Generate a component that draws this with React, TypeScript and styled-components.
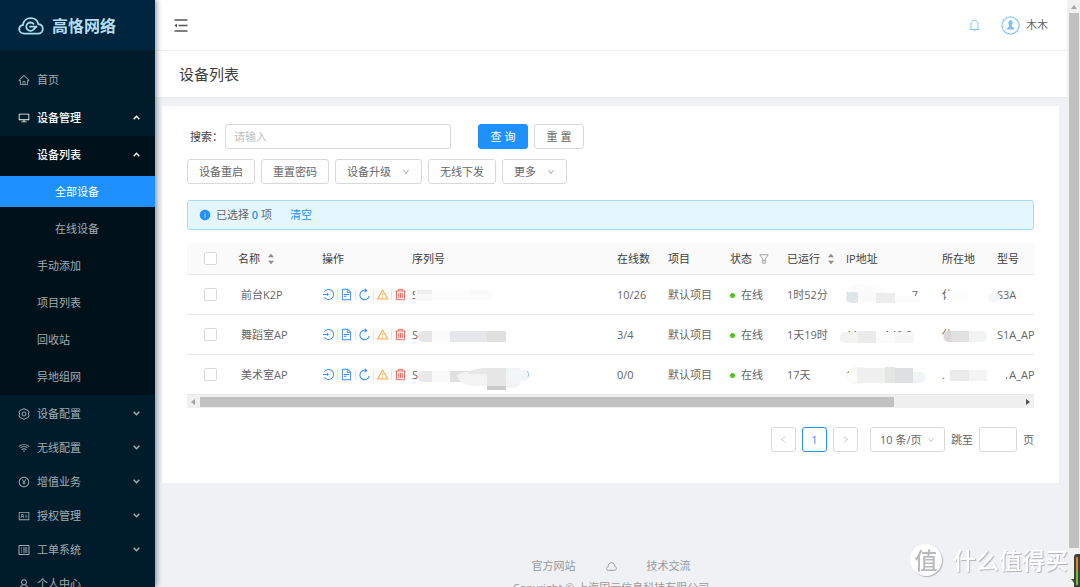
import React from "react";
import styled, { createGlobalStyle, css } from "styled-components";
import {
  AiOutlineHome,
  AiOutlineDesktop,
  AiOutlineWifi,
  AiOutlinePayCircle,
  AiOutlineIdcard,
  AiOutlineUser,
  AiOutlineLogin,
  AiOutlineFileText,
  AiOutlineWarning,
  AiOutlineDown,
  AiOutlineLeft,
  AiOutlineRight,
  AiFillInfoCircle,
} from "react-icons/ai";

const blue = "#1e90ff";
const line = "#e8e8e8";
const border = "#d9d9d9";
const text = "#666666";
const strong = "#404040";

const Global = createGlobalStyle`
  *, *::before, *::after { box-sizing: border-box; }
  body {
    margin: 0;
    overflow: hidden;
    background: #eff1f5;
    color: ${text};
    font: 11px/16px "Open Sans", "Noto Sans CJK SC", sans-serif;
  }
  button, input, select { font: inherit; color: inherit; }
  ul { list-style: none; margin: 0; padding: 0; }
  a { color: inherit; text-decoration: none; }
  svg { display: block; flex: none; }
`;

const Shell = styled.div`
  display: flex;
  height: 100vh;
  overflow: hidden;
`;

/* ---------- sidebar ---------- */

const Sidebar = styled.aside`
  flex: 0 0 155px;
  z-index: 1;
  background: #001c2b;
  box-shadow: 2px 0 5px rgba(0, 21, 41, 0.4);
  overflow: hidden;
`;

const Brand = styled.a`
  display: flex;
  align-items: center;
  gap: 8px;
  height: 50px;
  padding: 2px 18px 0;
  background: #00253f;
  color: #b4dfee;
  font-size: 16px;
  line-height: 24px;
  font-weight: 700;
`;

const Menu = styled.ul`
  display: flex;
  flex-direction: column;
  gap: 3px;
  padding-top: 14px;
`;

const SubMenu = styled.ul<{ $dark?: boolean }>`
  display: flex;
  flex-direction: column;
  gap: 6px;
  margin-top: ${(p) => (p.$dark ? 3 : 6)}px;
  padding: ${(p) => (p.$dark ? "3px 0" : "0")};
  background: ${(p) => (p.$dark ? "#00111a" : "transparent")};
`;

const MenuItem = styled.li<{ $spaced?: boolean }>`
  margin-bottom: ${(p) => (p.$spaced ? 4 : 0)}px;
`;

const MenuLink = styled.a<{ $level?: number; $open?: boolean; $active?: boolean }>`
  display: flex;
  align-items: center;
  height: 31px;
  padding: 0 15px 0 ${(p) => [18, 37, 55][p.$level ?? 0]}px;
  gap: 7px;
  color: ${(p) => (p.$open || p.$active ? "#ffffff" : "#a3acb2")};
  background: ${(p) => (p.$active ? blue : "transparent")};
  font-weight: ${(p) => (p.$open ? 500 : 400)};

  span { flex: 1; }
`;

/* ---------- main area ---------- */

const Main = styled.div`
  flex: 1;
  min-width: 0;
  display: flex;
  flex-direction: column;
`;

const TopBar = styled.header`
  flex: none;
  display: flex;
  align-items: center;
  justify-content: space-between;
  height: 51px;
  padding: 0 19px;
  background: #fff;
  border-bottom: 1px solid #eef2f3;
`;

const IconButton = styled.button<{ $color?: string }>`
  display: inline-flex;
  padding: 0;
  border: 0;
  background: none;
  color: ${(p) => p.$color ?? text};
`;

const UserArea = styled.div`
  display: flex;
  align-items: center;
  gap: 21px;
`;

const User = styled.a`
  display: flex;
  align-items: center;
  gap: 6px;
`;

const PageHeader = styled.div`
  flex: none;
  padding: 12px 24px 11px;
  background: #fff;
  border-bottom: 1px solid #e9ebef;

  h1 {
    margin: 0;
    color: ${strong};
    font-size: 15px;
    line-height: 23px;
    font-weight: 400;
  }
`;

const Card = styled.main`
  flex: none;
  margin: 8px 8px 0 7px;
  padding: 18px 25px 31px;
  background: #fff;
`;

const SearchRow = styled.form`
  display: flex;
  align-items: center;
  gap: 6px;
  padding-left: 3px;

  label { color: ${strong}; width: 29px; white-space: nowrap; }
`;

const control = css`
  height: 25px;
  border: 1px solid ${border};
  border-radius: 3px;
  background: #fff;
`;

const TextInput = styled.input<{ $width: number; $after?: number }>`
  ${control}
  width: ${(p) => p.$width}px;
  margin-right: ${(p) => p.$after ?? 0}px;
  padding: 0 8px;
  &::placeholder { color: #bfbfbf; }
`;

const Button = styled.button<{ $primary?: boolean }>`
  ${control}
  display: inline-flex;
  align-items: center;
  justify-content: center;
  gap: 11px;
  min-width: 50px;
  padding: 0 11px;
  white-space: pre;
  ${(p) => p.$primary && css`
    border-color: ${blue};
    background: ${blue};
    color: #fff;
  `}
  svg { color: #999; }
`;

const Toolbar = styled.div`
  display: flex;
  gap: 6px;
  margin: 10px 0 16px;
`;

const Notice = styled.div`
  display: flex;
  align-items: center;
  height: 30px;
  padding: 0 11px;
  margin-bottom: 13px;
  gap: 5px;
  background: #e4f7ff;
  border: 1px solid #a6dcfb;
  border-radius: 3px;

  svg, b, a { color: ${blue}; }
  b { font-weight: 600; }
  a { margin-left: 13px; }
`;

/* ---------- table ---------- */

const Table = styled.table`
  width: 100%;
  table-layout: fixed;
  border-collapse: separate;
  border-spacing: 0;

  th, td {
    position: relative;
    padding: 0 0 0 4px;
    border-bottom: 1px solid ${line};
    text-align: left;
    white-space: nowrap;
    font-weight: 400;
  }
  th { height: 32px; background: #fafafa; color: ${strong}; }
  td { height: 40px; }
  th:first-child, td:first-child { padding: 0 0 0 17px; }
`;

const Check = styled.input.attrs({ type: "checkbox" })`
  appearance: none;
  display: block;
  width: 13px;
  height: 13px;
  margin: 0;
  border: 1px solid ${border};
  border-radius: 2px;
  background: #fff;
`;

const HeadLabel = styled.span`
  display: inline-flex;
  align-items: center;
  gap: 7px;
`;

const Name = styled.span`
  padding-left: 3px;
`;

const Actions = styled.div`
  display: flex;
  align-items: center;
  gap: 2px;
`;

const Divider = styled.i`
  width: 1px;
  height: 10px;
  background: ${line};
`;

const Status = styled.span`
  display: inline-flex;
  align-items: center;
  gap: 6px;

  &::before {
    content: "";
    width: 5px;
    height: 5px;
    border-radius: 50%;
    background: #4fc31c;
  }
`;

const Smudge = styled.svg`
  position: absolute;
  inset: 0;
  width: 100%;
  height: 100%;
  overflow: visible;
`;

const Fragments = styled.span<{ $width: number }>`
  display: flex;
  justify-content: space-between;
  width: ${(p) => p.$width}px;
`;

const HScroll = styled.div`
  display: flex;
  align-items: center;
  justify-content: space-between;
  height: 13px;
  padding: 0 4px;
  background: #f0f0f0;
`;

const HTrack = styled.div`
  flex: 1;
  margin: 0 10px 0 5px;
`;

const HThumb = styled.div`
  width: 85%;
  height: 10px;
  background: #c1c1c1;
`;

const Pagination = styled.nav`
  display: flex;
  align-items: center;
  justify-content: flex-end;
  gap: 6px;
  margin-top: 19px;
`;

const PageButton = styled.button<{ $current?: boolean }>`
  ${control}
  display: inline-flex;
  align-items: center;
  justify-content: center;
  width: 25px;
  padding: 0;
  color: ${(p) => (p.$current ? blue : "#c4c4c4")};
  border-color: ${(p) => (p.$current ? blue : border)};
`;

const SelectWrap = styled.span`
  display: inline-grid;
  align-items: center;
  margin-left: 6px;

  select, svg { grid-area: 1 / 1; }
  svg { justify-self: end; margin-right: 10px; color: #bfbfbf; pointer-events: none; }
`;

const Select = styled.select`
  ${control}
  appearance: none;
  width: 75px;
  padding: 0 9px;
`;

const Footer = styled.footer`
  flex: none;
  display: flex;
  flex-direction: column;
  align-items: center;
  gap: 6px;
  padding-top: 75px;
  color: #999;
  white-space: nowrap;
`;

const FooterLinks = styled.div`
  display: flex;
  align-items: center;
  gap: 30px;
`;

/* ---------- window edge ---------- */

const VScroll = styled.div`
  flex: 0 0 13px;
  display: flex;
  flex-direction: column;
  align-items: center;
  padding: 5px 0 4px;
  background: #f1f1f1;
`;

const VThumb = styled.div`
  flex: 1;
  width: 10px;
  margin: 4px 0 31px;
  background: #c1c1c1;
`;

const Meter = styled.div`
  position: fixed;
  right: -6px;
  bottom: -3px;
  width: 12px;
  height: 36px;
  padding: 3px 2px;
  border-radius: 3px;
  background: #3a3f3f;

  &::before {
    content: "";
    display: block;
    width: 2px;
    height: 28px;
    background: linear-gradient(#e08a1a 50%, #6cc91e 50%);
  }
`;

const Watermark = styled.div`
  position: fixed;
  z-index: 2;
  right: 12px;
  bottom: 11px;
  display: flex;
  align-items: center;
  gap: 11px;
  color: #fff;
  font-size: 23px;
  line-height: 32px;
  font-weight: 500;
  text-shadow: 1px 1px 1px #b4b4b8;
`;

const Seal = styled.span`
  width: 32px;
  height: 32px;
  border-radius: 50%;
  background: #fff;
  color: #b9babd;
  text-align: center;
  text-shadow: none;
  box-shadow: 1px 1px 1px #b4b4b8;
`;

/* ---------- drawings ---------- */

const CloudLogo = () => (
  <svg width="26" height="18" viewBox="0 0 26 18" fill="none" stroke="#a9dcec" strokeWidth="1.8" strokeLinecap="round">
    <path d="M6.5 16.6C3.4 16.6 1.2 14.8 1.2 12.2C1.2 9.9 2.9 8.3 5 7.9C5.5 3.9 8.7 1.2 12.7 1.2C16.5 1.2 19.6 3.7 20.4 7.2C23 7.5 24.8 9.4 24.8 12C24.8 14.7 22.7 16.6 19.8 16.6Z" />
    <path d="M15.6 6.9A4.200 4.200 0 1 0 15.6 12.500" />
    <path d="M12 9.700H18.500M16 12.200L18.200 9.900" />
  </svg>
);

const FoldIcon = () => (
  <svg width="14" height="13" viewBox="0 0 14 13" fill="none" stroke="#555" strokeWidth="1.3">
    <path d="M0.5 1H13.5M4.5 6.5H13.5M0.5 12H13.5" />
    <path d="M0.3 6.5L3 4.4V8.6Z" fill="#555" stroke="none" />
  </svg>
);

const Avatar = () => (
  <svg width="19" height="19" viewBox="0 0 19 19">
    <circle cx="9.5" cy="9.5" r="8.6" fill="#fff" stroke="#8cc8f8" strokeWidth="1.3" />
    <path
      d="M9.5 4.3C11 4.3 11.7 5.3 11.6 6.7C11.5 8 11 8.5 10.7 9.2V10.5C11.5 11.2 13.2 11.2 13.3 13.6H5.7C5.8 11.2 7.5 11.2 8.3 10.5V9.2C8 8.5 7.5 8 7.4 6.7C7.3 5.3 8 4.3 9.5 4.3Z"
      fill="#78bdf5"
    />
  </svg>
);

const Bell = () => (
  <svg width="11" height="13" viewBox="0 0 11 13" fill="none" stroke="currentColor">
    <path d="M0.5 10.500H10.500M2 10.500V5C2 2.700 3.500 1.300 5.500 1.300S9 2.700 9 5V10.500" />
    <path d="M4.300 11.200H6.700L5.500 12.600Z" fill="currentColor" stroke="none" />
  </svg>
);

type IconProps = { size: number };

const GearIcon = ({ size }: IconProps) => (
  <svg width={size} height={size} viewBox="0 0 12 12" fill="none" stroke="currentColor">
    <path d="M4.800 0.900H7.200L8.200 2L9.800 2.100L11 4.200L10.300 6L11 7.800L9.800 9.900L8.200 10L7.200 11.100H4.800L3.800 10L2.200 9.900L1 7.800L1.700 6L1 4.200L2.200 2.100L3.800 2Z" strokeLinejoin="round" />
    <circle cx="6" cy="6" r="2" />
  </svg>
);

const ListIcon = ({ size }: IconProps) => (
  <svg width={size} height={size} viewBox="0 0 12 12" fill="none" stroke="currentColor">
    <path d="M1 1.500H11V10.500H1ZM3 4H4M5 4H9.500M3 6H4M5 6H9.500M3 8H4M5 8H9.500" />
  </svg>
);

const ReloadIcon = ({ size }: IconProps) => (
  <svg width={size} height={size} viewBox="0 0 13 13" fill="none" stroke="currentColor" strokeWidth="1.1">
    <path d="M7 2.300A4.700 4.700 0 1 0 11.300 7.200M6.200 0.600L8 2.300L6.200 4.200" transform="rotate(8 6.500 7)" />
  </svg>
);

const TrashIcon = ({ size }: IconProps) => (
  <svg width={size} height={size} viewBox="0 0 13 13" fill="none" stroke="currentColor">
    <path d="M1.500 3H11.500M4.500 3V1.300H8.500V3M2.500 3V11.700H10.500V3M4.700 5V10M6.500 5V10M8.300 5V10" />
  </svg>
);

const FunnelIcon = () => (
  <svg width="10" height="10" viewBox="0 0 10 10" fill="none" stroke="#a6a6a6">
    <path d="M0.800 0.700H9.200L6.300 5V9.300H3.700V5ZM3.700 6.300H6.300" strokeLinejoin="round" />
  </svg>
);

const CloudIcon = () => (
  <svg width="11" height="9" viewBox="0 0 11 9" fill="none" stroke="currentColor">
    <path d="M2.500 8.300C1.300 8.300 0.600 7.500 0.600 6.400C0.600 5.400 1.200 4.700 2.200 4.500C2.300 2.200 3.600 0.700 5.500 0.700S8.700 2.200 8.800 4.500C9.800 4.700 10.400 5.400 10.400 6.400C10.400 7.500 9.700 8.300 8.500 8.300Z" />
  </svg>
);

const Caret = ({ up }: { up?: boolean }) => (
  <svg width="7" height="5" viewBox="0 0 7 5" fill="none" stroke="currentColor" strokeWidth="1.5">
    <path d={up ? "M0.7 4.2L3.5 1.3L6.3 4.2" : "M0.7 0.8L3.5 3.7L6.3 0.8"} />
  </svg>
);

const SortIcon = () => (
  <svg width="8" height="12" viewBox="0 0 8 12" fill="#8c8c8c">
    <path d="M4 0.8L7 4.3H1ZM4 11.2L1 7.7H7Z" />
  </svg>
);

const Arrow = ({ dir, color }: { dir: "left" | "right" | "up" | "down"; color: string }) => {
  const shapes = {
    left: "M4 0V6L0 3Z",
    right: "M0 0V6L4 3Z",
    up: "M0 4H6L3 0Z",
    down: "M0 0H6L3 4Z",
  };
  const flat = dir === "up" || dir === "down";
  return (
    <svg width={flat ? 6 : 4} height={flat ? 4 : 6} fill={color} aria-hidden>
      <path d={shapes[dir]} />
    </svg>
  );
};

const serialSmudges = [
  <Smudge key="0">
    <rect x="7" y="14" width="18" height="12" rx="4" fill="#f8f8f8" />
    <rect x="9" y="15" width="15" height="4" fill="#eeeeee" />
    <rect x="24" y="15" width="60" height="10" fill="#fcfcfc" />
    <rect x="61" y="15" width="20" height="4" fill="#f8f8f8" />
  </Smudge>,
  <Smudge key="1">
    <rect x="10" y="16" width="20" height="11" rx="5" fill="#e6e6e6" />
    <rect x="24" y="16" width="18" height="11" fill="#fbfbfb" />
    <rect x="42" y="16" width="37" height="11" fill="#e5e7ea" />
    <rect x="79" y="16" width="19" height="11" fill="#e0e0e0" />
  </Smudge>,
  <Smudge key="2">
    <rect x="10" y="16" width="20" height="11" rx="5" fill="#e9e9e9" />
    <rect x="24" y="16" width="18" height="11" fill="#f9f9f9" />
    <rect x="42" y="16" width="37" height="11" fill="#e0e0e0" />
    <path d="M60 17Q68 13 79 13H112V30Q108 34 98 33L79 31H62Q50 27 49 21Q52 17 60 17Z" fill="#f2f3f2" />
    <path d="M60 17Q68 13 79 13V19H60Z" fill="#e8e8e6" />
    <rect x="79" y="13" width="19" height="18" fill="#e6e6e7" />
    <rect x="79" y="31" width="19" height="4" fill="#cbcbcb" />
    <rect x="98" y="15" width="23" height="11" rx="5" fill="#f3f6f7" />
    <path d="M119 16Q122 19 120 22" stroke="#8fc0ee" fill="none" />
  </Smudge>,
];

const ipSmudges = [
  <Smudge key="0">
    <path d="M5 15Q10 7 22 9L45 14V26H8Z" fill="#fcfcfc" />
    <rect x="4" y="17" width="14" height="11" rx="5" fill="#dfe6e7" />
    <rect x="16" y="16" width="18" height="11" fill="#fafafa" />
    <rect x="34" y="18" width="19" height="10" fill="#ededed" />
    <rect x="53" y="21" width="25" height="7" fill="#fcfcfc" />
  </Smudge>,
  <Smudge key="1">
    <rect x="-2" y="17" width="24" height="11" rx="5" fill="#f3f3f2" />
    <rect x="16" y="16" width="18" height="12" fill="#ebebeb" />
    <rect x="34" y="17" width="19" height="11" fill="#fbfbfb" />
    <rect x="53" y="17" width="19" height="11" fill="#f6f6f6" />
  </Smudge>,
  <Smudge key="2">
    <rect x="7" y="12" width="18" height="17" rx="5" fill="#f8f8f4" />
    <rect x="4" y="18" width="12" height="9" fill="#fcfcfa" />
    <rect x="15" y="13" width="28" height="15" fill="#eff0ef" />
    <rect x="43" y="12" width="10" height="16" fill="#e3e6e3" />
    <rect x="60" y="17" width="23" height="11" rx="5" fill="#f1f4f4" />
    <rect x="53" y="13" width="18" height="15" fill="#dde0e2" />
  </Smudge>,
];

const placeSmudges = [
  <Smudge key="0">
    <rect x="8" y="16" width="22" height="11" fill="#fcfcfc" />
  </Smudge>,
  <Smudge key="1">
    <rect x="5" y="16" width="44" height="11" rx="5" fill="#f1f4f3" />
    <rect x="6" y="16" width="18" height="11" rx="5" fill="#dad6da" />
    <rect x="13" y="16" width="18" height="11" fill="#e0e1e0" />
  </Smudge>,
  <Smudge key="2">
    <rect x="12" y="15" width="19" height="11" fill="#ebebeb" />
    <rect x="31" y="15" width="18" height="11" fill="#f4f4f4" />
  </Smudge>,
];

const modelSmudges = [
  <Smudge key="0">
    <rect x="-5" y="18" width="12" height="9" rx="4" fill="#f5f6f8" />
  </Smudge>,
  null,
  <Smudge key="2">
    <rect x="3" y="10" width="13" height="12" fill="#fff" />
    <rect x="3" y="10" width="10" height="18" fill="#fff" />
  </Smudge>,
];

/* ---------- data ---------- */

const rows = [
  { name: "前台K2P", online: "10/26", uptime: "1时52分", ip: ["1", "7"], ipWidth: 72, place: "休", model: "S3A" },
  { name: "舞蹈室AP", online: "3/4", uptime: "1天19时", ip: ["11", "140.8"], ipWidth: 66, place: "休", model: "S1A_AP" },
  { name: "美术室AP", online: "0/0", uptime: "17天", ip: ["1"], ipWidth: 72, place: ".", model: "S1A_AP" },
];

const lowerMenu = [
  { label: "设备配置", Icon: GearIcon },
  { label: "无线配置", Icon: AiOutlineWifi },
  { label: "增值业务", Icon: AiOutlinePayCircle },
  { label: "授权管理", Icon: AiOutlineIdcard },
  { label: "工单系统", Icon: ListIcon },
];

const actions = [
  { label: "登录", Icon: AiOutlineLogin, color: "#3d8bff" },
  { label: "详情", Icon: AiOutlineFileText, color: "#3d8bff" },
  { label: "重启", Icon: ReloadIcon, color: "#3d8bff" },
  { label: "告警", Icon: AiOutlineWarning, color: "#ffa03a" },
  { label: "删除", Icon: TrashIcon, color: "#f5675e" },
];

export default function App() {
  return (
    <>
      <Global />
      <Shell>
        <Sidebar>
          <Brand href="#">
            <CloudLogo />
            高恪网络
          </Brand>
          <Menu>
            <MenuItem $spaced>
              <MenuLink href="#"><AiOutlineHome size={12} /><span>首页</span></MenuLink>
            </MenuItem>
            <MenuItem>
              <MenuLink href="#" $open><AiOutlineDesktop size={12} /><span>设备管理</span><Caret up /></MenuLink>
              <SubMenu $dark>
                <li>
                  <MenuLink href="#" $level={1} $open><span>设备列表</span><Caret up /></MenuLink>
                  <SubMenu>
                    <li><MenuLink href="#" $level={2} $active>全部设备</MenuLink></li>
                    <li><MenuLink href="#" $level={2}>在线设备</MenuLink></li>
                  </SubMenu>
                </li>
                {["手动添加", "项目列表", "回收站", "异地组网"].map((label) => (
                  <li key={label}><MenuLink href="#" $level={1}>{label}</MenuLink></li>
                ))}
              </SubMenu>
            </MenuItem>
            {lowerMenu.map(({ label, Icon }) => (
              <MenuItem key={label}>
                <MenuLink href="#"><Icon size={12} /><span>{label}</span><Caret /></MenuLink>
              </MenuItem>
            ))}
            <MenuItem>
              <MenuLink href="#"><AiOutlineUser size={12} /><span>个人中心</span></MenuLink>
            </MenuItem>
          </Menu>
        </Sidebar>

        <Main>
          <TopBar>
            <IconButton aria-label="收起菜单"><FoldIcon /></IconButton>
            <UserArea>
              <IconButton aria-label="通知" $color="#86c5f8"><Bell /></IconButton>
              <User href="#"><Avatar />木木</User>
            </UserArea>
          </TopBar>
          <PageHeader><h1>设备列表</h1></PageHeader>

          <Card>
            <SearchRow onSubmit={(e) => e.preventDefault()}>
              <label htmlFor="keyword">搜索：</label>
              <TextInput id="keyword" placeholder="请输入" $width={226} $after={21} />
              <Button type="submit" $primary>查 询</Button>
              <Button type="reset">重 置</Button>
            </SearchRow>
            <Toolbar>
              <Button>设备重启</Button>
              <Button>重置密码</Button>
              <Button>设备升级<AiOutlineDown size={8} /></Button>
              <Button>无线下发</Button>
              <Button>更多<AiOutlineDown size={8} /></Button>
            </Toolbar>
            <Notice>
              <AiFillInfoCircle size={12} />
              <span>已选择 <b>0</b> 项</span>
              <a href="#">清空</a>
            </Notice>

            <Table>
              <colgroup>
                <col width="47" />
                <col width="84" />
                <col width="90" />
                <col />
                <col width="51" />
                <col width="62" />
                <col width="57" />
                <col width="59" />
                <col width="96" />
                <col width="55" />
                <col width="41" />
              </colgroup>
              <thead>
                <tr>
                  <th><Check aria-label="全选" /></th>
                  <th><HeadLabel>名称 <SortIcon /></HeadLabel></th>
                  <th>操作</th>
                  <th>序列号</th>
                  <th>在线数</th>
                  <th>项目</th>
                  <th><HeadLabel>状态 <FunnelIcon /></HeadLabel></th>
                  <th><HeadLabel>已运行 <SortIcon /></HeadLabel></th>
                  <th>IP地址</th>
                  <th>所在地</th>
                  <th>型号</th>
                </tr>
              </thead>
              <tbody>
                {rows.map((r, i) => (
                  <tr key={r.name}>
                    <td><Check aria-label={r.name} /></td>
                    <td><Name>{r.name}</Name></td>
                    <td>
                      <Actions>
                        {actions.map(({ label, Icon, color }, n) => (
                          <React.Fragment key={label}>
                            {n > 0 && <Divider />}
                            <IconButton aria-label={label} $color={color}><Icon size={13} /></IconButton>
                          </React.Fragment>
                        ))}
                      </Actions>
                    </td>
                    <td>S{serialSmudges[i]}</td>
                    <td>{r.online}</td>
                    <td>默认项目</td>
                    <td><Status>在线</Status></td>
                    <td>{r.uptime}</td>
                    <td>
                      <Fragments $width={r.ipWidth}>{r.ip.map((part) => <span key={part}>{part}</span>)}</Fragments>
                      {ipSmudges[i]}
                    </td>
                    <td>{r.place}{placeSmudges[i]}</td>
                    <td>{r.model}{modelSmudges[i]}</td>
                  </tr>
                ))}
              </tbody>
            </Table>
            <HScroll>
              <Arrow dir="left" color="#a3a3a3" />
              <HTrack><HThumb /></HTrack>
              <Arrow dir="right" color="#505050" />
            </HScroll>

            <Pagination aria-label="分页">
              <PageButton aria-label="上一页"><AiOutlineLeft size={9} /></PageButton>
              <PageButton $current>1</PageButton>
              <PageButton aria-label="下一页"><AiOutlineRight size={9} /></PageButton>
              <SelectWrap>
                <Select aria-label="每页条数"><option>10 条/页</option></Select>
                <AiOutlineDown size={8} />
              </SelectWrap>
              <label htmlFor="jump">跳至</label>
              <TextInput id="jump" $width={38} />
              <span>页</span>
            </Pagination>
          </Card>

          <Footer>
            <FooterLinks>
              <a href="#">官方网站</a>
              <a href="#" aria-label="云平台"><CloudIcon /></a>
              <a href="#">技术交流</a>
            </FooterLinks>
            <div>Copyright © 上海国云信息科技有限公司</div>
          </Footer>
        </Main>

        <VScroll>
          <Arrow dir="up" color="#a3a3a3" />
          <VThumb />
          <Arrow dir="down" color="#505050" />
        </VScroll>
      </Shell>
      <Meter />
      <Watermark><Seal>值</Seal>什么值得买</Watermark>
    </>
  );
}
